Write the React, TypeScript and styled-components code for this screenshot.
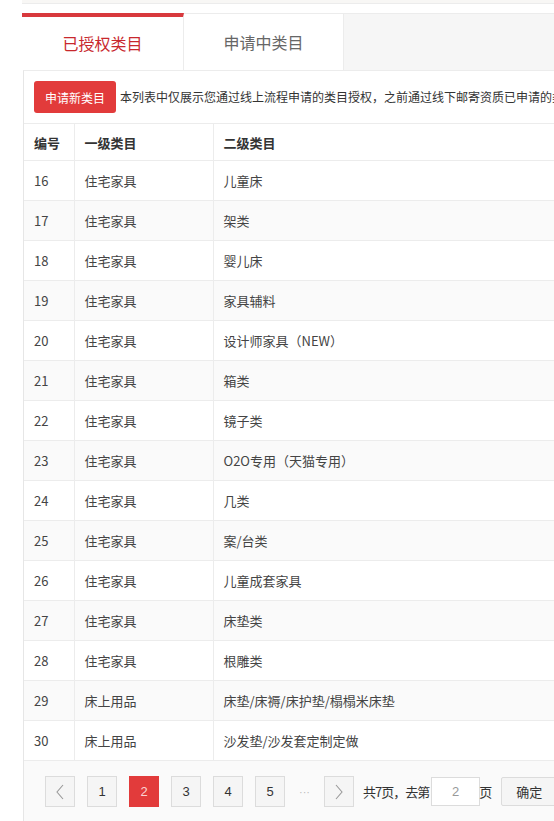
import React from 'react';
import styled, { createGlobalStyle } from 'styled-components';

const GlobalStyle = createGlobalStyle`
  html, body {
    margin: 0;
    padding: 0;
    background: #ffffff;
    overflow: hidden;
  }
  body {
    font-family: 'Noto Sans CJK SC', 'Noto Sans', sans-serif;
    color: #333;
  }
`;

const rows = [
  { id: 16, first: '住宅家具', second: '儿童床' },
  { id: 17, first: '住宅家具', second: '架类' },
  { id: 18, first: '住宅家具', second: '婴儿床' },
  { id: 19, first: '住宅家具', second: '家具辅料' },
  { id: 20, first: '住宅家具', second: '设计师家具（NEW）' },
  { id: 21, first: '住宅家具', second: '箱类' },
  { id: 22, first: '住宅家具', second: '镜子类' },
  { id: 23, first: '住宅家具', second: 'O2O专用（天猫专用）' },
  { id: 24, first: '住宅家具', second: '几类' },
  { id: 25, first: '住宅家具', second: '案/台类' },
  { id: 26, first: '住宅家具', second: '儿童成套家具' },
  { id: 27, first: '住宅家具', second: '床垫类' },
  { id: 28, first: '住宅家具', second: '根雕类' },
  { id: 29, first: '床上用品', second: '床垫/床褥/床护垫/榻榻米床垫' },
  { id: 30, first: '床上用品', second: '沙发垫/沙发套定制定做' },
];

function App() {
  return (
    <>
      <GlobalStyle />
      <Page>
        <TopStrip />
        <TabBar>
          <Tab $active>已授权类目</Tab>
          <Tab>申请中类目</Tab>
        </TabBar>
        <Panel>
          <Toolbar>
            <ApplyButton>申请新类目</ApplyButton>
            <Notice>
              本列表中仅展示您通过线上流程申请的类目授权，之前通过线下邮寄资质已申请的类目授权请联系小二查询。
            </Notice>
          </Toolbar>
          <Table>
            <thead>
              <tr>
                <HeadCell $w={50}>编号</HeadCell>
                <HeadCell $w={139}>一级类目</HeadCell>
                <HeadCell>二级类目</HeadCell>
              </tr>
            </thead>
            <tbody>
              {rows.map((r, i) => (
                <Row key={r.id} $striped={i % 2 === 1}>
                  <Cell>{r.id}</Cell>
                  <Cell>{r.first}</Cell>
                  <Cell>{r.second}</Cell>
                </Row>
              ))}
            </tbody>
          </Table>
          <Pager>
            <PageBtn $arrow>
              <svg width="10" height="16" viewBox="0 0 10 16">
                <path d="M8 1 L2 8 L8 15" fill="none" stroke="#999" strokeWidth="1.1" />
              </svg>
            </PageBtn>
            <PageBtn>1</PageBtn>
            <PageBtn $current>2</PageBtn>
            <PageBtn>3</PageBtn>
            <PageBtn>4</PageBtn>
            <PageBtn>5</PageBtn>
            <Dots>···</Dots>
            <PageBtn $arrow>
              <svg width="10" height="16" viewBox="0 0 10 16">
                <path d="M2 1 L8 8 L2 15" fill="none" stroke="#999" strokeWidth="1.1" />
              </svg>
            </PageBtn>
            <PagerText>共7页，去第</PagerText>
            <PageInput defaultValue="2" />
            <PagerText>页</PagerText>
            <ConfirmBtn>确定</ConfirmBtn>
          </Pager>
        </Panel>
      </Page>
    </>
  );
}

export default App;

const Page = styled.div`
  width: 900px;
  padding-left: 22px;
`;

const TopStrip = styled.div`
  height: 3px;
  background: #f8f7f5;
  border-bottom: 1px solid #ececec;
  margin-bottom: 9px;
`;

const TabBar = styled.div`
  display: flex;
  height: 56px;
  background: #f6f6f6;
  border-top: 1px solid #ececec;
`;

const Tab = styled.div<{ $active?: boolean }>`
  width: 160px;
  box-sizing: border-box;
  margin-top: -1px;
  display: flex;
  align-items: center;
  justify-content: center;
  background: #ffffff;
  border-top: ${(p) => (p.$active ? '4px solid #d8393d' : '1px solid #ececec')};
  border-right: 1px solid #ececec;
  padding-bottom: ${(p) => (p.$active ? '1px' : '0')};
  font-size: 16px;
  line-height: 20px;
  color: ${(p) => (p.$active ? '#c8282d' : '#666')};
  &:first-child {
    width: 162px;
  }
`;

const Panel = styled.div`
  margin-left: 1px;
  background: #ffffff;
  border-left: 1px solid #e6e6e6;
  border-top: 1px solid #ececec;
`;

const Toolbar = styled.div`
  display: flex;
  align-items: center;
  gap: 4px;
  height: 52px;
  padding-left: 10px;
  white-space: nowrap;
  overflow: hidden;
`;

const ApplyButton = styled.button`
  width: 82px;
  height: 32px;
  border: none;
  border-radius: 3px;
  background: #e23b3b;
  color: #ffffff;
  font-family: inherit;
  font-size: 12px;
  padding: 0;
  flex-shrink: 0;
`;

const Notice = styled.span`
  font-size: 12px;
  line-height: 16px;
  color: #333;
`;

const Table = styled.table`
  width: 100%;
  border-collapse: collapse;
  border-top: 1px solid #ececec;
`;

const HeadCell = styled.th<{ $w?: number }>`
  width: ${(p) => (p.$w ? `${p.$w}px` : 'auto')};
  height: 37px;
  box-sizing: border-box;
  padding: 0 0 0 10px;
  text-align: left;
  font-size: 13px;
  font-weight: bold;
  color: #333;
  border-right: 1px solid #ececec;
  border-bottom: 1px solid #ececec;
`;

const Row = styled.tr<{ $striped: boolean }>`
  background: ${(p) => (p.$striped ? '#fafafa' : '#ffffff')};
`;

const Cell = styled.td`
  height: 40px;
  box-sizing: border-box;
  padding: 0 0 0 10px;
  font-size: 13px;
  color: #444;
  border-right: 1px solid #ececec;
  border-bottom: 1px solid #ececec;
`;

const Pager = styled.div`
  display: flex;
  align-items: center;
  height: 61px;
  padding-left: 21px;
  background: #fafafa;
  white-space: nowrap;
`;

const PageBtn = styled.div<{ $current?: boolean; $arrow?: boolean }>`
  width: 30px;
  height: 31px;
  box-sizing: border-box;
  margin-right: 12px;
  display: flex;
  align-items: center;
  justify-content: center;
  border: 1px solid ${(p) => (p.$current ? '#e23b3b' : '#dcdcdc')};
  background: ${(p) => (p.$current ? '#e23b3b' : '#f5f5f5')};
  color: ${(p) => (p.$current ? '#fbd3d3' : '#333')};
  font-family: 'Liberation Sans', sans-serif;
  font-size: 13px;
`;

const Dots = styled.span`
  width: 15px;
  margin-right: 12px;
  color: #bbbbbb;
  font-family: 'Liberation Sans', sans-serif;
  font-size: 11px;
  text-align: center;
`;

const PagerText = styled.span`
  font-size: 13px;
  color: #333;
  margin-left: -3px;
  letter-spacing: -1px;
`;

const PageInput = styled.input`
  width: 49px;
  height: 29px;
  box-sizing: border-box;
  margin: 0 2px 0 2px;
  border: 1px solid #dcdcdc;
  background: #ffffff;
  text-align: center;
  color: #999;
  font-family: 'Liberation Sans', sans-serif;
  font-size: 13px;
  outline: none;
`;

const ConfirmBtn = styled.div`
  width: 56px;
  height: 29px;
  box-sizing: border-box;
  margin-left: 10px;
  display: flex;
  align-items: center;
  justify-content: center;
  border: 1px solid #dcdcdc;
  border-radius: 2px;
  background: #f5f5f5;
  font-size: 13px;
  color: #333;
`;
